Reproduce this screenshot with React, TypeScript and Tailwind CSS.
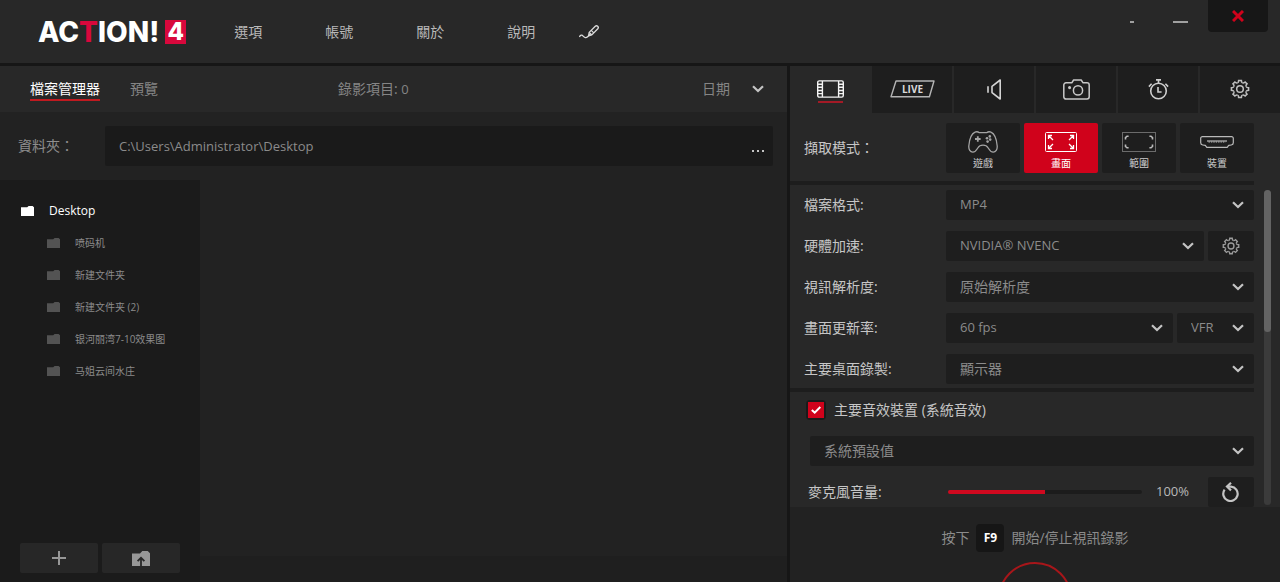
import { useState } from 'react';
import type { ReactNode } from 'react';
import clsx from 'clsx';

const folders = ['喷码机', '新建文件夹', '新建文件夹 (2)', '银河丽湾7-10效果图', '马姐云间水庄'];

function Chevron() {
  return (
    <svg className="w-3 h-2 pointer-events-none" viewBox="0 0 12 8" fill="none" stroke="#c4c4c4" strokeWidth="2.2">
      <path d="M1 1.2 6 6 11 1.2" />
    </svg>
  );
}

function FolderIcon({ className }: { className?: string }) {
  return (
    <svg className={clsx('w-[13px] h-[10px] shrink-0', className)} viewBox="0 0 13 10" fill="currentColor">
      <path d="M0 1.3h6.2L7.6 0h4L13 1.2V10H0Z" />
    </svg>
  );
}

function GearIcon({ className }: { className?: string }) {
  const teeth = [0, 45, 90, 135, 180, 225, 270, 315];
  return (
    <svg className={className} viewBox="0 0 20 20" fill="none" stroke="currentColor" strokeWidth="1.5">
      {teeth.map((deg) => (
        <path
          key={deg}
          transform={`rotate(${deg} 10 10)`}
          d="M7.45 3.85 Q8.4 3.4 8.5 2.6 L8.6 1.4 H11.4 L11.5 2.6 Q11.6 3.4 12.55 3.85"
        />
      ))}
      <circle cx="10" cy="10" r="3.3" />
    </svg>
  );
}

function PenIcon() {
  return (
    <svg className="w-5 h-[14px]" viewBox="0 0 20 14" fill="none" stroke="#dcdcdc" strokeWidth="1.3" strokeLinejoin="round">
      <path d="M.4 11.9C1.4 10 3 9.6 4.2 11.2c1.2 1.5 3 1.9 4.4.5l1-.9" />
      <path d="M9.6 10.8 10.2 7.4 16.3 1.3c1.5-1.5 4 .7 2.5 2.4l-6 6.2Z" />
      <path d="M10.2 7.4 12.8 9.9M9.6 10.8l2-2M12.2 5.4l2.6 2.5" />
    </svg>
  );
}

function FilmIcon() {
  return (
    <svg className="w-[27px] h-[18px]" viewBox="0 0 27 18" fill="none" stroke="#f4f4f4" strokeWidth="1.4">
      <rect x=".7" y=".9" width="25.6" height="16.2" rx="1.6" />
      <path d="M5.4 1v16M21.6 1v16" />
      <path d="M1 4.3h4.4M1 7.3h4.4M1 10.5h4.4M1 13.6h4.4M21.6 4.3H26M21.6 7.3H26M21.6 10.5H26M21.6 13.6H26" />
    </svg>
  );
}

function LiveIcon() {
  return (
    <svg className="w-[45px] h-[18px]" viewBox="0 0 45 18" fill="none" stroke="#b4b4b4" strokeWidth="1.4" strokeLinejoin="round">
      <path d="M6 1H44L39.4 16.8H1Z" />
      <text x="22.5" y="12.6" textAnchor="middle" className="text-[10px] font-bold" fill="#dadada" stroke="none">
        LIVE
      </text>
    </svg>
  );
}

function SpeakerIcon() {
  return (
    <svg className="w-[15px] h-[21px]" viewBox="0 0 15 21" fill="none" stroke="#d4d4d4" strokeWidth="1.6" strokeLinejoin="round">
      <path d="M13.2 1v19L5 13.6V7.4ZM1 7.2v6.6" />
    </svg>
  );
}

function CameraIcon() {
  return (
    <svg className="w-[27px] h-[21px]" viewBox="0 0 27 21" fill="none" stroke="#c8c8c8" strokeWidth="1.5" strokeLinejoin="round">
      <path d="M3 3.8h5.8L10.6 1h7.6l1.9 2.8H24a2.2 2.2 0 0 1 2.2 2.2v11.8A2.2 2.2 0 0 1 24 20H3a2.2 2.2 0 0 1-2.2-2.2V6A2.2 2.2 0 0 1 3 3.8Z" />
      <circle cx="15" cy="11.4" r="4.6" />
      <circle cx="6.6" cy="8.6" r=".8" fill="#c8c8c8" />
    </svg>
  );
}

function TimerIcon() {
  return (
    <svg className="w-[21px] h-[21px]" viewBox="0 0 21 21" fill="none" stroke="#cfcfcf" strokeWidth="1.6">
      <circle cx="10.5" cy="12" r="7.8" />
      <path d="M8 .9h5M10.5 1v3.2M.9 7.6l2.7-2.8M20.1 7.6l-2.7-2.8M10 8v5h3.6" />
    </svg>
  );
}

function GamepadIcon() {
  return (
    <svg className="w-[30px] h-[22px]" viewBox="0 0 30 22" fill="none" stroke="#a4a4a4" strokeWidth="1.3">
      <path d="M7 1.2C8.6.4 10 .7 11.4 1.7H18.600C20 .7 21.4.4 23 1.200 26.4 2.7 28.6 8 29.200 15c.3 3.600-1.500 6.200-4 6.200-2.600 0-3.400-1.500-5-4.200C19 15 17.500 14.200 15 14.200S11 15 9.800 17c-1.600 2.700-2.400 4.200-5 4.200-2.500 0-4.300-2.600-4-6.200C1.400 8 3.600 2.700 7 1.200Z" />
      <path d="M9.8 5.2v5.6M7 8h5.6" strokeWidth="1.8" />
      <g fill="#a4a4a4" stroke="none">
        <circle cx="21.8" cy="5.4" r="1.3" />
        <circle cx="19" cy="7.2" r="1.3" />
        <circle cx="22.2" cy="8.6" r="1.3" />
        <circle cx="19.6" cy="10.6" r="1.3" />
      </g>
    </svg>
  );
}

function ScreenIcon() {
  return (
    <svg className="w-8 h-5" viewBox="0 0 32 20" fill="none" stroke="#fff" strokeWidth="1">
      <rect x=".5" y=".5" width="31" height="19" rx="1" />
      <g strokeWidth="1.3">
        <path d="M3.500 7V3.500H7M3.500 3.500 8 8M28.500 7V3.500H25M28.500 3.500 24 8" />
        <path d="M3.500 13v3.500H7M3.500 16.500 8 12M28.500 13v3.500H25M28.500 16.500 24 12" />
      </g>
    </svg>
  );
}

function RangeIcon() {
  return (
    <svg className="w-[34px] h-5" viewBox="0 0 34 20" fill="none" stroke="#b9b9b9">
      <rect x=".5" y=".5" width="33" height="19" strokeDasharray="1 1" />
      <path d="M3.500 7.400V5.600L5 4.200h1.600M30.500 7.400V5.600L29 4.200h-1.600M3.500 12.600v1.800L5 15.800h1.600M30.500 12.600v1.800L29 15.800h-1.600" strokeWidth="1.6" />
    </svg>
  );
}

function DeviceIcon() {
  return (
    <svg className="w-[34px] h-3" viewBox="0 0 34 12" fill="none" stroke="#b9b9b9" strokeWidth="1.2" strokeLinejoin="round">
      <path d="M2.4.6h29.2a1.7 1.7 0 0 1 1.7 1.7v4.500c0 1.300-.8 2-2 2.200l-2.600.4-1.500 2H6.800l-1.500-2L2.700 9C1.500 8.800.7 8.100.7 6.800V2.300A1.700 1.700 0 0 1 2.400.6Z" />
      <path d="M7 5h20" />
      <path d="M8.5 6h17" strokeDasharray="1.4 1" />
    </svg>
  );
}

interface SelectFieldProps {
  label: string;
  value: string;
  className?: string;
}

function SelectField({ label, value, className }: SelectFieldProps) {
  return (
    <div className={clsx('grid items-center h-[30px] bg-[#1e1e1e] rounded-xs', className)}>
      <select
        aria-label={label}
        className="col-start-1 row-start-1 appearance-none w-full h-full min-w-0 pl-[14px] pr-8 bg-transparent text-[#8b8b8b] outline-none cursor-pointer"
      >
        <option>{value}</option>
      </select>
      <span className="col-start-1 row-start-1 justify-self-end pr-[10px] pointer-events-none">
        <Chevron />
      </span>
    </div>
  );
}

function SettingRow({ label, children }: { label: string; children: ReactNode }) {
  return (
    <div className="flex items-center">
      <span className="w-[142px] shrink-0 text-sm text-[#c6c6c6]">{label}</span>
      <div className="flex flex-1 gap-1 min-w-0">{children}</div>
    </div>
  );
}

function Header() {
  return (
    <header className="flex items-start justify-between shrink-0 h-[66px] bg-[#282828] border-b-[3px] border-[#161616]">
      <div className="flex items-center h-full pl-[38px]">
        <div className="flex items-center gap-[6px] font-['Inter',sans-serif] font-extrabold text-white leading-6">
          <span className="text-[28px]">
            AC<span className="text-[#d8083c]">T</span>ION!
          </span>
          <span className="w-[21px] h-6 bg-[#d8083c] text-center text-2xl leading-6">4</span>
        </div>
        <nav className="flex items-center gap-[63px] ml-12 text-sm text-[#b9b9b9]">
          <a href="#options">選項</a>
          <a href="#account">帳號</a>
          <a href="#about">關於</a>
          <a href="#help">說明</a>
        </nav>
        <button aria-label="Draw" className="ml-[44px] cursor-pointer">
          <PenIcon />
        </button>
      </div>
      <div className="flex items-start pr-3">
        <button aria-label="Compact" className="flex items-center justify-center w-12 h-11 cursor-pointer">
          <span className="w-1 h-0.5 bg-[#a0a0a0]" />
        </button>
        <button aria-label="Minimize" className="flex items-center justify-center w-12 h-11 mr-1 cursor-pointer">
          <span className="w-[15px] h-0.5 bg-[#a0a0a0]" />
        </button>
        <button aria-label="Close" className="flex items-center justify-center w-[60px] h-8 bg-[#171717] rounded-b-sm cursor-pointer">
          <svg className="w-3 h-3" viewBox="0 0 12 12" stroke="#d0021b" strokeWidth="3">
            <path d="M1 1 11 11M11 1 1 11" />
          </svg>
        </button>
      </div>
    </header>
  );
}

function FileManager() {
  return (
    <section className="flex flex-col flex-1 min-w-0 bg-[#222222]">
      <div className="flex items-center shrink-0 h-[46px] pl-[30px] pr-[23px] bg-[#282828] text-sm leading-5 text-[#858585]">
        <button className="relative text-white cursor-pointer">
          檔案管理器
          <span className="absolute inset-x-0 -bottom-0.5 h-0.5 bg-[#c01a20]" />
        </button>
        <button className="ml-[30px] cursor-pointer">預覽</button>
        <span className="ml-[180px]">
          錄影項目: <span className="text-[13px]">0</span>
        </span>
        <div className="grid items-center w-[62px] ml-auto">
          <select aria-label="Sort" className="col-start-1 row-start-1 appearance-none w-full bg-transparent outline-none cursor-pointer">
            <option>日期</option>
          </select>
          <span className="col-start-1 row-start-1 justify-self-end pointer-events-none">
            <Chevron />
          </span>
        </div>
      </div>

      <div className="flex items-center shrink-0 h-[68px] pl-[18px] pr-[14px]">
        <label htmlFor="folder-path" className="w-[87px] shrink-0 text-sm text-[#8f8f8f]">
          資料夾：
        </label>
        <div className="flex items-center flex-1 h-10 bg-[#1a1a1a] rounded-xs">
          <input
            id="folder-path"
            defaultValue="C:\Users\Administrator\Desktop"
            className="flex-1 min-w-0 h-full pl-[14px] bg-transparent text-[13px] text-[#8b8b8b] outline-none"
          />
          <button aria-label="Browse" className="w-[30px] h-full flex items-center justify-center pt-[10px] cursor-pointer">
            <svg className="w-3 h-0.5" viewBox="0 0 12 2" fill="#c4c4c4">
              <path d="M0 0h2v2H0zM5 0h2v2H5zM10 0h2v2h-2z" />
            </svg>
          </button>
        </div>
      </div>

      <div className="flex flex-1 min-h-0">
        <aside className="flex flex-col w-[200px] shrink-0 px-5 pb-[9px] pt-[15px] bg-[#1b1b1b]">
          <ul className="flex-1 min-h-0 pl-px overflow-hidden text-[#8b8b8b]">
            <li className="flex items-center gap-[15px] h-8 text-xs text-white">
              <FolderIcon />
              Desktop
            </li>
            {folders.map((name) => (
              <li key={name} className="flex items-center gap-[15px] h-8 pl-[26px] text-[10px] whitespace-nowrap">
                <FolderIcon className="text-[#535353]" />
                {name}
              </li>
            ))}
          </ul>
          <div className="flex gap-1">
            <button aria-label="Add folder" className="flex items-center justify-center flex-1 h-[30px] bg-[#272727] rounded-xs cursor-pointer">
              <svg className="w-[14px] h-[14px]" viewBox="0 0 14 14" stroke="#979797" strokeWidth="2">
                <path d="M7 0v14M0 7h14" />
              </svg>
            </button>
            <button aria-label="Open folder" className="flex items-center justify-center flex-1 h-[30px] bg-[#272727] rounded-xs cursor-pointer">
              <svg className="w-[18px] h-[15px]" viewBox="0 0 18 15">
                <path d="M0 2.6h8L10.3 0h5.4L18 2.2V15H0Z" fill="#979797" />
                <path d="M9 15V7M5.6 10.2 9 6.8l3.4 3.4" fill="none" stroke="#272727" strokeWidth="1.8" />
              </svg>
            </button>
          </div>
        </aside>
        <div className="flex flex-col flex-1">
          <div className="flex-1" />
          <div className="h-[26px] bg-[#1f1f1f]" />
        </div>
      </div>
    </section>
  );
}

const tabs = [
  { id: 'video', icon: <FilmIcon /> },
  { id: 'live', icon: <LiveIcon /> },
  { id: 'audio', icon: <SpeakerIcon /> },
  { id: 'screenshot', icon: <CameraIcon /> },
  { id: 'benchmark', icon: <TimerIcon /> },
  { id: 'settings', icon: <GearIcon className="w-5 h-5 text-[#c0c0c0]" /> },
];

const modes = [
  { label: '遊戲', icon: <GamepadIcon /> },
  { label: '畫面', icon: <ScreenIcon /> },
  { label: '範圍', icon: <RangeIcon /> },
  { label: '裝置', icon: <DeviceIcon /> },
];

function RecordPanel() {
  const [tab, setTab] = useState('video');
  const [mode, setMode] = useState('畫面');
  const [volume, setVolume] = useState(100);
  const fill = volume / 2;

  return (
    <section className="flex flex-col w-[493px] shrink-0 border-l-[3px] border-[#161616] bg-[#282828]">
      <div className="flex gap-0.5 shrink-0">
        {tabs.map(({ id, icon }) => (
          <button
            key={id}
            aria-label={id}
            onClick={() => setTab(id)}
            className={clsx(
              'relative flex flex-1 items-center justify-center h-[47px] pb-px cursor-pointer',
              tab !== id && 'bg-[#1e1e1e]'
            )}
          >
            {icon}
            {tab === id && <span className="absolute bottom-[10px] w-[25px] h-0.5 bg-[#a31a26]" />}
          </button>
        ))}
      </div>

      <div className="flex items-center shrink-0 h-[68px] pl-[14px] pt-0.5">
        <span className="w-[142px] text-sm text-[#c6c6c6]">擷取模式：</span>
        <div className="flex flex-1 gap-1 pr-[26px]">
          {modes.map(({ label, icon }) => (
            <button
              key={label}
              onClick={() => setMode(label)}
              className={clsx(
                'flex flex-col flex-1 items-center h-[50px] pt-2 rounded-xs text-[10px] leading-3 cursor-pointer',
                mode === label ? 'bg-[#d0021b] text-white' : 'bg-[#1e1e1e] text-[#cccccc]'
              )}
            >
              <span className="flex items-center justify-center h-[22px] mb-1">{icon}</span>
              {label}
            </button>
          ))}
        </div>
      </div>

      <div className="flex flex-1 min-h-0 overflow-hidden">
        <div className="flex-1 min-w-0">
          <div className="h-1 bg-[#1d1d1d]" />
          <div className="flex flex-col gap-[11px] pl-[14px] pt-[5px] pb-1 text-[13px]">
            <SettingRow label="檔案格式:">
              <SelectField label="檔案格式" value="MP4" className="flex-1" />
            </SettingRow>
            <SettingRow label="硬體加速:">
              <SelectField label="硬體加速" value="NVIDIA® NVENC" className="flex-1" />
              <button aria-label="Encoder settings" className="flex items-center justify-center w-[46px] h-[30px] bg-[#1e1e1e] rounded-xs text-[#9c9c9c] cursor-pointer">
                <GearIcon className="w-[18px] h-[18px]" />
              </button>
            </SettingRow>
            <SettingRow label="視訊解析度:">
              <SelectField label="視訊解析度" value="原始解析度" className="flex-1 text-sm" />
            </SettingRow>
            <SettingRow label="畫面更新率:">
              <SelectField label="畫面更新率" value="60 fps" className="flex-1" />
              <SelectField label="VFR / CFR" value="VFR" className="w-[77px]" />
            </SettingRow>
            <SettingRow label="主要桌面錄製:">
              <SelectField label="主要桌面錄製" value="顯示器" className="flex-1 text-sm" />
            </SettingRow>
          </div>
          <div className="h-1 bg-[#1d1d1d]" />
          <div className="flex flex-col gap-[11px] pt-[3px]">
            <label className="flex items-center gap-2 h-[30px] pl-4 text-sm text-[#c6c6c6]">
              <span className="grid place-items-center w-5 h-5 border-2 border-[#1a1a1a] rounded-sm">
                <input
                  type="checkbox"
                  defaultChecked
                  className="peer col-start-1 row-start-1 appearance-none w-4 h-4 checked:bg-[#d0021b]"
                />
                <svg
                  className="col-start-1 row-start-1 w-[10px] h-2 pointer-events-none invisible peer-checked:visible"
                  viewBox="0 0 10 8"
                  fill="none"
                  stroke="#fff"
                  strokeWidth="2"
                >
                  <path d="M.8 4 3.7 6.6 9.3 1" />
                </svg>
              </span>
              主要音效裝置 (系統音效)
            </label>
            <SelectField label="主要音效裝置" value="系統預設值" className="ml-5 text-sm" />
            <div className="flex items-center pl-[18px]">
              <label htmlFor="mic-volume" className="w-[140px] shrink-0 text-sm text-[#c6c6c6]">
                麥克風音量:
              </label>
              <input
                id="mic-volume"
                type="range"
                min="0"
                max="200"
                value={volume}
                onChange={(e) => setVolume(Number(e.target.value))}
                style={{ background: `linear-gradient(to right, #d0091f ${fill}%, #1c1c1c ${fill}%)` }}
                className="flex-1 min-w-0 h-1 appearance-none rounded-full outline-none cursor-pointer [&::-webkit-slider-thumb]:appearance-none [&::-webkit-slider-thumb]:w-0 [&::-webkit-slider-thumb]:h-4"
              />
              <span className="w-[66px] pl-[14px] text-[13px] text-[#b9b9b9]">{volume}%</span>
              <button
                aria-label="Reset volume"
                onClick={() => setVolume(100)}
                className="flex items-center justify-center w-[46px] h-[30px] bg-[#1e1e1e] rounded-xs cursor-pointer"
              >
                <svg className="w-[18px] h-5" viewBox="0 0 18 20" fill="none" stroke="#c4c4c4" strokeWidth="2.2">
                  <path d="M2.6 7.6A7.2 7.2 0 1 0 9 4.600H5" />
                  <path d="M9 .8 5 4.600 9 8.400" />
                </svg>
              </button>
            </div>
          </div>
        </div>
        <div className="w-[26px] pl-[10px] pt-[9px] pb-0.5">
          <div className="w-[7px] h-full rounded-full bg-[#3b3b3b]">
            <div className="h-[45%] rounded-full bg-[#636363]" />
          </div>
        </div>
      </div>

      <footer className="flex flex-col items-center shrink-0 h-[75px] pt-[17px] bg-[#222222] overflow-hidden">
        <p className="flex items-center gap-[7px] shrink-0 text-sm text-[#8b8b8b]">
          按下
          <kbd className="flex items-center justify-center w-7 h-7 bg-[#161616] rounded-sm font-['Open_Sans','Noto_Sans_CJK_TC',sans-serif] text-xs font-bold text-white">
            F9
          </kbd>
          開始/停止視訊錄影
        </p>
        <button aria-label="Record" className="shrink-0 w-[74px] h-[74px] mt-[10px] border-2 border-[#a8161a] rounded-full cursor-pointer" />
      </footer>
    </section>
  );
}

export default function App() {
  return (
    <div className="flex flex-col h-screen overflow-hidden bg-[#222222] font-['Open_Sans','Noto_Sans_CJK_TC',sans-serif]">
      <Header />
      <main className="flex flex-1 min-h-0">
        <FileManager />
        <RecordPanel />
      </main>
    </div>
  );
}
